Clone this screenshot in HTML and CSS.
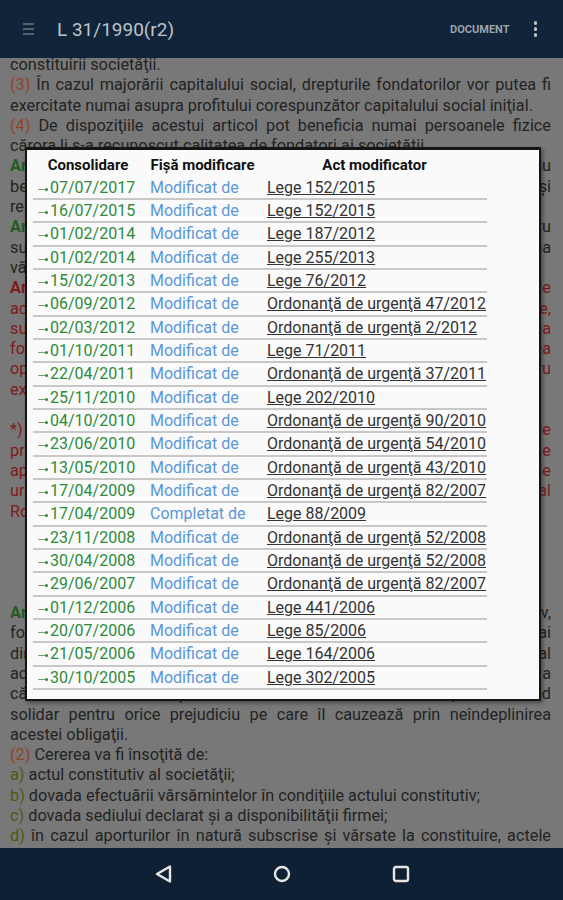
FILE: index.html
```html
<!DOCTYPE html>
<html lang="ro">
<head>
  <meta charset="UTF-8" />
  <meta name="viewport" content="width=device-width, initial-scale=1.0"/>
  <title>L 31/1990(r2)</title>
  <link rel="stylesheet" href="styles.css">
</head>
<body>
  <div class="screen">

    <header class="appbar">
      <span class="menu-icon"><i></i><i></i><i></i></span>
      <h1 class="title">L 31/1990(r2)</h1>
      <span class="action">DOCUMENT</span>
      <span class="kebab"><i></i><i></i><i></i></span>
    </header>

    <main class="doc">
      <div class="doc-text">
        <p>constituirii societăţii.</p>
        <p><span class="num">(3)</span> În cazul majorării capitalului social, drepturile fondatorilor vor putea fi exercitate numai asupra profitului corespunzător capitalului social iniţial.</p>
        <p><span class="num">(4)</span> De dispoziţiile acestui articol pot beneficia numai persoanele fizice cărora li s-a recunoscut calitatea de fondatori ai societăţii.</p>
        <p><b class="art">Art. 33.</b> - Fondatorii nu pot stipula în favoarea lor nicio altă dobândă sau beneficiu în afara celor prevăzute la articolul precedent şi nu pot să îşi rezerve vreun avantaj care ar leza drepturile asociaţilor.</p>
        <p><b class="art">Art. 34.</b> - Fondatorii răspund solidar faţă de societate şi faţă de terţi pentru subscrierea integrală a capitalului social şi pentru efectuarea vărsămintelor, conform actului constitutiv.</p>
        <p class="changed"><b>Art. 35.</b> - (1) Fondatorii, precum şi primii membri ai consiliului de administraţie, respectiv ai directoratului şi ai consiliului de supraveghere, sunt solidar răspunzători faţă de societate pentru neîndeplinirea formalităţilor necesare constituirii acesteia, pentru valabilitatea operaţiunilor încheiate în contul societăţii înainte de înmatriculare şi pentru exactitatea menţiunilor din actul constitutiv.</p>
        <p class="changed note">*) Articolul 35 a fost modificat prin Legea nr. 441/2006, iar dispoziţiile privind răspunderea primilor membri ai consiliului de supraveghere se aplică şi societăţilor înmatriculate anterior, potrivit art. IV din Ordonanţa de urgenţă a Guvernului nr. 82/2007, publicată în Monitorul Oficial al României, Partea I, nr. 446 din 29 iunie 2007.</p>
        <p class="section">SECŢIUNEA a 3-a<br>Înmatricularea societăţii</p>
        <p><b class="art">Art. 36.</b> - (1) În termen de 15 zile de la data semnării actului constitutiv, fondatorii, primii administratori sau, după caz, primii membri ai directoratului şi ai consiliului de supraveghere ori un împuternicit al acestora vor cere înmatricularea societăţii în registrul comerţului în a cărui&nbsp;rază&nbsp;teritorială îşi va avea sediul societatea. Ei răspund în mod solidar pentru orice prejudiciu pe care îl cauzează prin neîndeplinirea acestei obligaţii.</p>
        <p><span class="num">(2)</span> Cererea va fi însoţită de:</p>
        <p><span class="letter">a)</span> actul constitutiv al societăţii;</p>
        <p><span class="letter">b)</span> dovada efectuării vărsămintelor în condiţiile actului constitutiv;</p>
        <p><span class="letter">c)</span> dovada sediului declarat şi a disponibilităţii firmei;</p>
        <p><span class="letter">d)</span> în cazul aporturilor în natură subscrise şi vărsate la constituire, actele privitoare la proprietatea acestora şi, dacă printre ele se află imobile, certificatele constatatoare ale sarcinilor de care sunt grevate;</p>
      </div>

      <div class="dialog">
        <div class="changes">
          <div class="row head"><span>Consolidare</span><span>Fişă modificare</span><span>Act modificator</span></div>
          <div class="row"><span class="date"><i class="go"></i>07/07/2017</span><span class="kind">Modificat de</span><a class="act">Lege 152/2015</a></div>
          <div class="row"><span class="date"><i class="go"></i>16/07/2015</span><span class="kind">Modificat de</span><a class="act">Lege 152/2015</a></div>
          <div class="row"><span class="date"><i class="go"></i>01/02/2014</span><span class="kind">Modificat de</span><a class="act">Lege 187/2012</a></div>
          <div class="row"><span class="date"><i class="go"></i>01/02/2014</span><span class="kind">Modificat de</span><a class="act">Lege 255/2013</a></div>
          <div class="row"><span class="date"><i class="go"></i>15/02/2013</span><span class="kind">Modificat de</span><a class="act">Lege 76/2012</a></div>
          <div class="row"><span class="date"><i class="go"></i>06/09/2012</span><span class="kind">Modificat de</span><a class="act">Ordonanţă de urgenţă 47/2012</a></div>
          <div class="row"><span class="date"><i class="go"></i>02/03/2012</span><span class="kind">Modificat de</span><a class="act">Ordonanţă de urgenţă 2/2012</a></div>
          <div class="row"><span class="date"><i class="go"></i>01/10/2011</span><span class="kind">Modificat de</span><a class="act">Lege 71/2011</a></div>
          <div class="row"><span class="date"><i class="go"></i>22/04/2011</span><span class="kind">Modificat de</span><a class="act">Ordonanţă de urgenţă 37/2011</a></div>
          <div class="row"><span class="date"><i class="go"></i>25/11/2010</span><span class="kind">Modificat de</span><a class="act">Lege 202/2010</a></div>
          <div class="row"><span class="date"><i class="go"></i>04/10/2010</span><span class="kind">Modificat de</span><a class="act">Ordonanţă de urgenţă 90/2010</a></div>
          <div class="row"><span class="date"><i class="go"></i>23/06/2010</span><span class="kind">Modificat de</span><a class="act">Ordonanţă de urgenţă 54/2010</a></div>
          <div class="row"><span class="date"><i class="go"></i>13/05/2010</span><span class="kind">Modificat de</span><a class="act">Ordonanţă de urgenţă 43/2010</a></div>
          <div class="row"><span class="date"><i class="go"></i>17/04/2009</span><span class="kind">Modificat de</span><a class="act">Ordonanţă de urgenţă 82/2007</a></div>
          <div class="row"><span class="date"><i class="go"></i>17/04/2009</span><span class="kind">Completat de</span><a class="act">Lege 88/2009</a></div>
          <div class="row"><span class="date"><i class="go"></i>23/11/2008</span><span class="kind">Modificat de</span><a class="act">Ordonanţă de urgenţă 52/2008</a></div>
          <div class="row"><span class="date"><i class="go"></i>30/04/2008</span><span class="kind">Modificat de</span><a class="act">Ordonanţă de urgenţă 52/2008</a></div>
          <div class="row"><span class="date"><i class="go"></i>29/06/2007</span><span class="kind">Modificat de</span><a class="act">Ordonanţă de urgenţă 82/2007</a></div>
          <div class="row"><span class="date"><i class="go"></i>01/12/2006</span><span class="kind">Modificat de</span><a class="act">Lege 441/2006</a></div>
          <div class="row"><span class="date"><i class="go"></i>20/07/2006</span><span class="kind">Modificat de</span><a class="act">Lege 85/2006</a></div>
          <div class="row"><span class="date"><i class="go"></i>21/05/2006</span><span class="kind">Modificat de</span><a class="act">Lege 164/2006</a></div>
          <div class="row"><span class="date"><i class="go"></i>30/10/2005</span><span class="kind">Modificat de</span><a class="act">Lege 302/2005</a></div>
        </div>
      </div>
    </main>

    <nav class="navbar">
      <svg viewBox="0 0 24 24" width="24" height="24"><polygon points="19,4.5 19,19.5 6,12" /></svg>
      <svg viewBox="0 0 24 24" width="24" height="24"><circle cx="12" cy="12" r="7" /></svg>
      <svg viewBox="0 0 24 24" width="24" height="24"><rect x="5" y="5" width="14" height="14" rx="2" /></svg>
    </nav>

  </div>
</body>
</html>
```

FILE: styles.css
```css
* {
  box-sizing: border-box;
}

html, body {
  margin: 0;
}

body {
  font-family: Roboto, "Noto Sans", sans-serif;
  background: #0e2034;
}

.screen {
  width: 563px;
  height: 900px;
  display: flex;
  flex-direction: column;
  overflow: hidden;
}

/* top bar (dimmed by the open dialog) */
.appbar {
  height: 58px;
  flex: none;
  display: flex;
  align-items: center;
  padding-left: 23px;
  background: #102539;
}

.menu-icon {
  width: 11px;
  display: flex;
  flex-direction: column;
  gap: 3px;
}

.menu-icon i {
  height: 2px;
  background: #56606b;
}

.title {
  flex: 1;
  margin: 0 0 0 23px;
  font-size: 19px;
  font-weight: 400;
  color: #bcc2c8;
}

.action {
  font-size: 11px;
  font-weight: 700;
  color: #9ba2a9;
}

.kebab {
  display: flex;
  flex-direction: column;
  gap: 2.5px;
  margin: 0 26px 0 24px;
}

.kebab i {
  width: 3.5px;
  height: 3.5px;
  border-radius: 50%;
  background: #c4c4c4;
}

/* document text, greyed out behind the dialog */
.doc {
  flex: 1;
  position: relative;
  overflow: hidden;
  background: #787878;
}

.doc-text {
  margin-top: -3px;
  padding: 0 12px 0 10px;
  font-size: 16.3px;
  line-height: 20.3px;
  color: #232323;
  text-align: justify;
}

.doc-text p {
  margin: 0;
}

.num {
  color: #8e4526;
}

.art {
  color: #1f5c1f;
}

.letter {
  color: #4c5a14;
}

.changed {
  color: #7f1a1a;
}

.doc-text .note {
  margin-top: 20.3px;
}

.doc-text .section {
  margin: 20.3px 0;
  text-align: center;
}

/* dialog */
.dialog {
  position: absolute;
  top: 89px;
  left: 25px;
  width: 516px;
  height: 554px;
  padding: 5px 0 0 6px;
  background: #fafafa;
  border: 2px solid #151515;
  border-top-width: 3px;
  box-shadow: 2px 2px 4px rgba(0, 0, 0, 0.4);
}

.changes {
  width: 454px;
  font-size: 16px;
}

.row {
  display: grid;
  grid-template-columns: 110px 119px 225px;
  height: 23.33px;
  line-height: 21.33px;
  white-space: nowrap;
  border-bottom: 2px solid #c8c8c8;
}

.row.head {
  height: 21.7px;
  line-height: 21.7px;
  border-bottom: 0;
  font-size: 15px;
  font-weight: 700;
  color: #111;
  text-align: center;
}

.date {
  padding-left: 5px;
  color: #2e8b3b;
}

/* small link arrow before each date */
.go {
  display: inline-block;
  position: relative;
  width: 7px;
  height: 1px;
  margin-right: 5px;
  vertical-align: 3px;
  background: #7f9a7f;
}

.go::after {
  content: "";
  position: absolute;
  right: -3px;
  top: -1px;
  width: 3px;
  height: 3px;
  border-radius: 50%;
  background: #2e8b3b;
}

.kind {
  padding-left: 7px;
  color: #5b97d8;
}

.act {
  padding-left: 5px;
  color: #333;
  text-decoration: underline;
}

/* system bar */
.navbar {
  height: 52px;
  flex: none;
  display: flex;
  align-items: center;
  justify-content: center;
  gap: 95px;
  background: #0e2034;
}

.navbar svg {
  fill: none;
  stroke: #e6e6e6;
  stroke-width: 2.4;
  stroke-linejoin: round;
}
```
